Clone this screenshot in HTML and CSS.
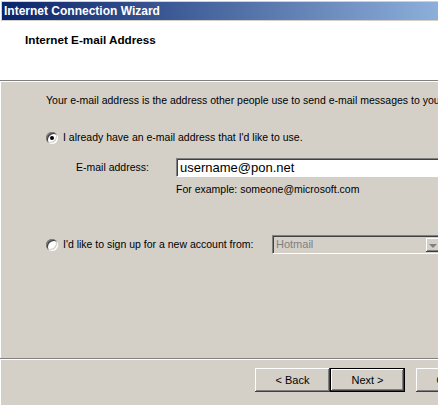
FILE: index.html
```html
<!DOCTYPE html>
<html lang="en">
<head>
    <meta charset="UTF-8">
    <title>Internet Connection Wizard</title>
    <link rel="stylesheet" href="styles.css">
</head>
<body>
    <div class="window">
        <div class="titlebar">Internet Connection Wizard</div>

        <div class="header">
            <h1>Internet E-mail Address</h1>
        </div>

        <div class="content">
            <p class="intro">Your e-mail address is the address other people use to send e-mail messages to you</p>

            <label class="option option-first">
                <span class="radio checked"></span>
                <span>I already have an e-mail address that I'd like to use.</span>
            </label>

            <div class="field-row">
                <span class="field-label">E-mail address:</span>
                <div class="textbox">username@pon.net</div>
            </div>
            <div class="hint">For example: someone@microsoft.com</div>

            <div class="option option-second">
                <label class="option-label">
                    <span class="radio"></span>
                    <span>I'd like to sign up for a new account from:</span>
                </label>
                <div class="combo">
                    <span class="combo-text">Hotmail</span>
                    <span class="combo-button"></span>
                </div>
            </div>
        </div>

        <div class="footer">
            <button class="btn">&lt; Back</button>
            <button class="btn btn-default">Next &gt;</button>
            <button class="btn btn-cancel">Cancel</button>
        </div>
    </div>
</body>
</html>
```

FILE: styles.css
```css
body {
    margin: 0;
    overflow: hidden;
    background: #d4d0c8;
    font-family: "Liberation Sans", Arial, sans-serif;
    font-size: 10.5px;
    line-height: 13px;
    color: #000;
}

.window {
    width: 520px;
    height: 405px;
    padding: 2px 0 0 2px;
    background: #d4d0c8;
    box-shadow: inset 1px 1px 0 #fff;
}

.titlebar {
    height: 18px;
    line-height: 18px;
    padding-left: 2px;
    color: #fff;
    font-weight: bold;
    font-size: 12px;
    background: linear-gradient(to right, #0a246a, #a6caf0);
}

.header {
    margin-top: 1px;
    margin-left: -2px;
    height: 59px;
    background: #fff;
    border-bottom: 1px solid #808080;
    box-shadow: 0 1px 0 #fff;
}

.header h1 {
    margin: 0;
    padding: 12px 0 0 25px;
    font-size: 11.7px;
    line-height: 13px;
    font-weight: bold;
}

.content {
    padding: 13px 0 0 44px;
    height: 264px;
}

.intro {
    margin: 0;
    white-space: nowrap;
}

.option {
    display: flex;
    align-items: center;
    gap: 5px;
}

.option-first {
    margin-top: 24px;
}

.option-label {
    display: flex;
    align-items: center;
    gap: 5px;
    width: 221px;
}

.radio {
    width: 12px;
    height: 12px;
    border-radius: 50%;
    background: #fff;
    box-shadow: inset 1px 1px 0 #808080, inset -1px -1px 0 #fff, inset 2px 2px 0 #404040, inset -2px -2px 0 #d4d0c8;
    position: relative;
    flex-shrink: 0;
}

.radio.checked::after {
    content: "";
    position: absolute;
    left: 4px;
    top: 4px;
    width: 4px;
    height: 4px;
    border-radius: 50%;
    background: #000;
}

.field-row {
    display: flex;
    align-items: center;
    margin-top: 14px;
    padding-left: 30px;
}

.field-label {
    width: 100px;
}

.textbox {
    flex: 1;
    height: 13px;
    padding: 2px 3px;
    background: #fff;
    border-top: 1px solid #808080;
    border-left: 1px solid #808080;
    border-right: 1px solid #fff;
    border-bottom: 1px solid #fff;
    box-shadow: inset 1px 1px 0 #404040;
    font-size: 13px;
    line-height: 13px;
}

.hint {
    margin: 6px 0 0 130px;
}

.option-second {
    margin-top: 39px;
}

.combo {
    display: flex;
    align-items: center;
    width: 168px;
    height: 17px;
    background: #d4d0c8;
    border-top: 1px solid #808080;
    border-left: 1px solid #808080;
    border-right: 1px solid #fff;
    border-bottom: 1px solid #fff;
    box-shadow: inset 1px 1px 0 #404040;
}

.combo-text {
    flex: 1;
    padding-left: 3px;
    color: #808080;
    font-size: 11px;
}

.combo-button {
    width: 14px;
    height: 14px;
    margin-right: 1px;
    position: relative;
    background: #d4d0c8;
    box-shadow: inset -1px -1px 0 #404040, inset 1px 1px 0 #fff, inset -2px -2px 0 #808080;
}

.combo-button::after {
    content: "";
    position: absolute;
    left: 3px;
    top: 6px;
    border-left: 4px solid transparent;
    border-right: 4px solid transparent;
    border-top: 4px solid #808080;
}

.footer {
    margin-left: -2px;
    border-top: 1px solid #808080;
    box-shadow: inset 0 1px 0 #fff;
    padding: 9px 0 0 255px;
    display: flex;
}

.btn {
    width: 75px;
    height: 24px;
    padding: 0;
    font-family: "Liberation Sans", Arial, sans-serif;
    font-size: 11px;
    color: #000;
    background: #d4d0c8;
    border: none;
    box-shadow: inset -1px -1px 0 #404040, inset 1px 1px 0 #fff, inset -2px -2px 0 #808080;
}

.btn-default {
    border: 1px solid #000;
}

.btn-cancel {
    margin-left: 11px;
}
```
